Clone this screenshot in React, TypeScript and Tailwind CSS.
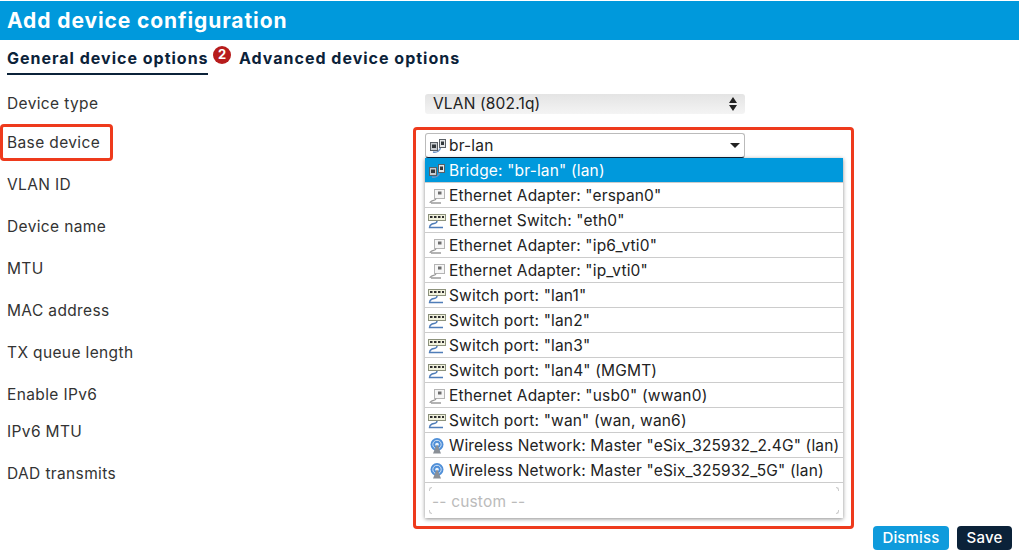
import React from 'react';

type IconKind = 'bridge' | 'adapter' | 'switch' | 'wifi';

interface Option {
  icon: IconKind;
  label: string;
  selected?: boolean;
}

const LABELS: { label: string; height: string }[] = [
  { label: 'Device type', height: 'h-[36px]' },
  { label: 'Base device', height: 'h-[42px]' },
  { label: 'VLAN ID', height: 'h-[42px]' },
  { label: 'Device name', height: 'h-[42px]' },
  { label: 'MTU', height: 'h-[42px]' },
  { label: 'MAC address', height: 'h-[42px]' },
  { label: 'TX queue length', height: 'h-[42px]' },
  { label: 'Enable IPv6', height: 'h-[42px]' },
  { label: 'IPv6 MTU', height: 'h-[32px]' },
  { label: 'DAD transmits', height: 'h-[52px]' },
];

const OPTIONS: Option[] = [
  { icon: 'bridge', label: 'Bridge: "br-lan" (lan)', selected: true },
  { icon: 'adapter', label: 'Ethernet Adapter: "erspan0"' },
  { icon: 'switch', label: 'Ethernet Switch: "eth0"' },
  { icon: 'adapter', label: 'Ethernet Adapter: "ip6_vti0"' },
  { icon: 'adapter', label: 'Ethernet Adapter: "ip_vti0"' },
  { icon: 'switch', label: 'Switch port: "lan1"' },
  { icon: 'switch', label: 'Switch port: "lan2"' },
  { icon: 'switch', label: 'Switch port: "lan3"' },
  { icon: 'switch', label: 'Switch port: "lan4" (MGMT)' },
  { icon: 'adapter', label: 'Ethernet Adapter: "usb0" (wwan0)' },
  { icon: 'switch', label: 'Switch port: "wan" (wan, wan6)' },
  { icon: 'wifi', label: 'Wireless Network: Master "eSix_325932_2.4G" (lan)' },
  { icon: 'wifi', label: 'Wireless Network: Master "eSix_325932_5G" (lan)' },
];

function DeviceIcon({ kind }: { kind: IconKind }) {
  if (kind === 'bridge') {
    return (
      <svg width="18" height="16" viewBox="0 0 18 16" className="shrink-0">
        <path d="M4 14c4 1 7-1 8-6" fill="none" stroke="#6f93c4" strokeWidth="1.4" />
        <rect x="1.5" y="4.5" width="7" height="8" fill="#c9ccd0" stroke="#5a5f65" />
        <rect x="3" y="6.5" width="4" height="3.5" fill="#33383c" />
        <rect x="10.5" y="1.5" width="6" height="8" fill="#e4e6e8" stroke="#5a5f65" />
        <rect x="12" y="3.5" width="3" height="3.5" fill="#33383c" />
      </svg>
    );
  }
  if (kind === 'adapter') {
    return (
      <svg width="18" height="16" viewBox="0 0 18 16" className="shrink-0">
        <rect x="6.5" y="1.5" width="10" height="9" fill="#f6f6f6" stroke="#b4b4b4" />
        <rect x="10" y="3.5" width="3.5" height="3" fill="#6d6d6d" />
        <path d="M8 10.5c0 2-3 1.500-5 3-1 .8-1 1.500-1 1.500M3 15h10" fill="none" stroke="#9a9a9a" strokeWidth="1.3" />
      </svg>
    );
  }
  if (kind === 'switch') {
    return (
      <svg width="18" height="16" viewBox="0 0 18 16" className="shrink-0">
        <rect x="0.5" y="1.5" width="17" height="6" fill="#f0f1dd" stroke="#8d927c" />
        <path d="M2 4h2.500M6 4h2.500M10 4h2.500M14 4h2" stroke="#2e2e2e" strokeWidth="2" />
        <path d="M9 8c0 3-3 2-5 3s-2.500 2-2.500 3.500H15" fill="none" stroke="#4f7db8" strokeWidth="1.4" />
      </svg>
    );
  }
  return (
    <svg width="18" height="16" viewBox="0 0 18 16" className="shrink-0">
      <circle cx="9" cy="6.500" r="6.500" fill="#4f8fd8" />
      <circle cx="9" cy="6.500" r="4.200" fill="none" stroke="#cfe2f6" strokeWidth="1" />
      <circle cx="9" cy="6.500" r="1.800" fill="#e8f2fb" />
      <path d="M8.500 7L5 15.500h8L9.500 7z" fill="#8a8f96" />
    </svg>
  );
}

// the custom-value input only shows at its rounded corners
function CustomInput() {
  return (
    <div className="relative h-full pt-[2px] flex items-center pl-[3px] text-[#bbb]">
      -- custom --
      <span className="absolute left-0 top-0 w-[3px] h-[4px] rounded-tl-[3px] border-l border-t border-[#ccc]" />
      <span className="absolute left-0 bottom-0 w-[3px] h-[4px] rounded-bl-[3px] border-l border-b border-[#ccc]" />
      <span className="absolute right-0 top-0 w-[3px] h-[4px] rounded-tr-[3px] border-r border-t border-[#ccc]" />
      <span className="absolute right-0 bottom-0 w-[3px] h-[4px] rounded-br-[3px] border-r border-b border-[#ccc]" />
    </div>
  );
}

export default function App() {
  return (
    <div className="relative w-[1019px] h-[556px] bg-white overflow-hidden font-['Inter',sans-serif] text-[#222] tracking-[0.17px]">
      <header className="mt-px h-[39px] bg-[#0099dc] px-[7px] flex items-center">
        <h1 className="text-[21px] font-bold text-white tracking-[0.9px]">Add device configuration</h1>
      </header>

      <nav className="flex pl-[7px] h-[35px] text-[#0b2239] text-[16px] font-bold tracking-[1px]">
        <div className="h-full pt-[2px] border-b-2 border-[#0b2239] flex items-center w-[201px] whitespace-nowrap">
          General device options
        </div>
        <span className="w-[18px] h-[18px] mt-[6px] ml-[5px] rounded-full bg-[#b71c1c] text-white text-[13px] tracking-normal font-bold flex items-center justify-center">
          2
        </span>
        <div className="flex items-center pt-[1px] ml-[8px] h-full whitespace-nowrap">Advanced device options</div>
      </nav>

      <div className="flex mt-[11px]">
        <div className="w-[425px] pl-[7px] text-[15.5px] tracking-[0.37px] text-[#333]">
          {LABELS.map(row => (
            <div key={row.label} className={`${row.height} flex items-center`}>
              {row.label}
            </div>
          ))}
        </div>

        <div className="w-[420px] pt-[8px]">
          <div className="w-[320px] h-[20px] rounded-[3px] bg-gradient-to-b from-[#e4e4e4] to-[#f4f4f4] flex items-center justify-between pl-[8px] pr-[8px] text-[15.5px]">
            <span>VLAN (802.1q)</span>
            <svg width="8" height="14" viewBox="0 0 8 14">
              <path d="M4 0l4 6H0zM4 14L0 8h8z" fill="#222" />
            </svg>
          </div>
          <div className="mt-[19px] w-[320px] h-[25px] rounded-[3px] border border-[#bbb] border-b-[#0b2239] bg-white flex items-center justify-between pl-[3px] pr-[4px] text-[15.5px]">
            <span className="flex items-center gap-[2px]">
              <DeviceIcon kind="bridge" />
              br-lan
            </span>
            <svg width="10" height="5" viewBox="0 0 10 5">
              <path d="M0 0h10L5 5z" fill="#222" />
            </svg>
          </div>
        </div>
      </div>

      <div className="absolute left-[425px] top-[158px] w-[418px] bg-white shadow-[0_1px_4px_rgba(0,0,0,0.45)] text-[15.5px]">
        {OPTIONS.map(opt => (
          <div
            key={opt.label}
            className={`h-[25px] pt-[2px] flex items-center gap-[3px] pl-[3px] whitespace-nowrap border-b border-[#ccc] ${
              opt.selected ? 'bg-[#0099dc] text-white' : ''
            }`}
          >
            <DeviceIcon kind={opt.icon} />
            {opt.label}
          </div>
        ))}
        <div className="h-[35px] px-[4px] py-[4px]">
          <CustomInput />
        </div>
      </div>

      <div className="absolute left-0 top-[124px] w-[113px] h-[37px] rounded-[4px] border-[3px] border-[#ee3a1c]" />
      <div className="absolute left-[413px] top-[127px] w-[441px] h-[402px] rounded-[4px] border-[3px] border-[#ee3a1c]" />

      <div className="absolute right-[7px] bottom-[6px] flex gap-[8px] text-[15px] font-medium">
        <button className="w-[76px] h-[24px] rounded-[4px] bg-[#0f9bdc] text-white">Dismiss</button>
        <button className="w-[55px] h-[24px] rounded-[4px] bg-[#0b2239] text-white">Save</button>
      </div>
    </div>
  );
}
